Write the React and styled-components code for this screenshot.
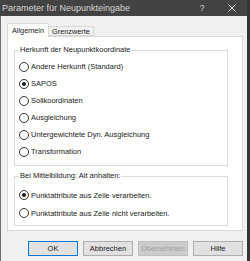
import { styled, createGlobalStyle } from "styled-components";

const GlobalStyle = createGlobalStyle`
  * { box-sizing: border-box; }
  html, body {
    margin: 0;
    background: #353535;
    overflow: hidden;
    font-family: "Liberation Sans", Arial, sans-serif;
  }
`;

const herkunft = [
  { label: "Andere Herkunft (Standard)" },
  { label: "SAPOS", checked: true },
  { label: "Sollkoordinaten" },
  { label: "Ausgleichung" },
  { label: "Untergewichtete Dyn. Ausgleichung" },
  { label: "Transformation" },
];

const mittel = [
  { label: "Punktattribute aus Zeile verarbeiten.", checked: true },
  { label: "Punktattribute aus Zeile nicht verarbeiten." },
];

function CloseIcon() {
  return (
    <svg width="8" height="8" viewBox="0 0 8 8">
      <path d="M0.5 0.5 L7.5 7.5 M7.5 0.5 L0.5 7.5" stroke="#d8d8d8" strokeWidth="1" />
    </svg>
  );
}

function App() {
  return (
    <>
      <GlobalStyle />
      <Window>
        <TitleBar>
          <Title>Parameter für Neupunkteingabe</Title>
          <TitleButton>?</TitleButton>
          <TitleButton><CloseIcon /></TitleButton>
        </TitleBar>
        <Body>
          <TabStrip>
            <Tab $active>Allgemein</Tab>
            <Tab>Grenzwerte</Tab>
          </TabStrip>
          <Page>
            <Group $top={3} $bottom={5}>
              <Legend>Herkunft der Neupunktkoordinate</Legend>
              {herkunft.map((r) => (
                <RadioRow key={r.label} $h={17}>
                  <RadioDot $checked={r.checked} />
                  {r.label}
                </RadioRow>
              ))}
            </Group>
            <Group $top={5} $bottom={3} $gap={5}>
              <Legend>Bei Mittelbildung: Alt anhalten:</Legend>
              {mittel.map((r) => (
                <RadioRow key={r.label} $h={18}>
                  <RadioDot $checked={r.checked} />
                  {r.label}
                </RadioRow>
              ))}
            </Group>
          </Page>
          <ButtonRow>
            <Button $default>OK</Button>
            <Button>Abbrechen</Button>
            <Button disabled>Übernehmen</Button>
            <Button>Hilfe</Button>
          </ButtonRow>
        </Body>
      </Window>
    </>
  );
}

const Window = styled.div`
  width: 247px;
  height: 261px;
  display: flex;
  flex-direction: column;
  background: #f0f0f0;
`;

const TitleBar = styled.div`
  height: 16px;
  flex: none;
  display: flex;
  align-items: center;
  background: #434343;
  color: #d6d6d6;
  font-size: 9px;
  padding-left: 2px;
`;

const Title = styled.div`
  flex: 1;
  white-space: nowrap;
`;

const TitleButton = styled.div`
  width: 30px;
  height: 16px;
  display: flex;
  align-items: center;
  justify-content: center;
  font-size: 8.5px;
`;

const Body = styled.div`
  flex: 1;
  display: flex;
  flex-direction: column;
  border-left: 1px solid #707070;
  padding: 7px 4px 0 6px;
`;

const TabStrip = styled.div`
  height: 13px;
  display: flex;
  align-items: flex-end;
`;

const Tab = styled.div`
  height: ${(p) => (p.$active ? "14px" : "10px")};
  margin-bottom: ${(p) => (p.$active ? "-1px" : "0")};
  position: relative;
  z-index: 1;
  display: flex;
  align-items: center;
  padding: ${(p) => (p.$active ? "0 4px 1px" : "0 3px")};
  background: ${(p) => (p.$active ? "#fff" : "#f0f0f0")};
  border: 1px solid #d9d9d9;
  border-bottom: ${(p) => (p.$active ? "none" : "1px solid #d9d9d9")};
  border-left: ${(p) => (p.$active ? "1px solid #d9d9d9" : "none")};
  font-size: 7.3px;
  color: #1a1a1a;
  white-space: nowrap;
`;

const Page = styled.div`
  height: 195px;
  flex: none;
  background: #fff;
  border: 1px solid #d9d9d9;
  padding: 8px 14px 0 6px;
`;

const Group = styled.fieldset`
  margin: ${(p) => p.$gap || 0}px 0 0 0;
  padding: ${(p) => p.$top}px 0 ${(p) => p.$bottom}px 4px;
  border: 1px solid #dcdcdc;
  min-width: 0;
`;

const Legend = styled.legend`
  padding: 0 1px;
  font-size: 7.5px;
  line-height: 10px;
  color: #1a1a1a;
  white-space: nowrap;
`;

const RadioRow = styled.div`
  height: ${(p) => p.$h}px;
  display: flex;
  align-items: center;
  font-size: 7.5px;
  color: #1a1a1a;
  white-space: nowrap;
`;

const RadioDot = styled.span`
  width: 10px;
  height: 10px;
  flex: none;
  margin-right: 2px;
  border-radius: 50%;
  border: 1px solid #333;
  background: #fff;
  display: flex;
  align-items: center;
  justify-content: center;
  &::after {
    content: "";
    width: 4px;
    height: 4px;
    border-radius: 50%;
    background: ${(p) => (p.$checked ? "#1a1a1a" : "transparent")};
  }
`;

const ButtonRow = styled.div`
  display: flex;
  justify-content: flex-end;
  gap: 5px;
  margin-top: 10px;
`;

const Button = styled.button`
  width: 50px;
  height: 15px;
  padding: 0;
  font: inherit;
  font-size: 7.5px;
  color: #1a1a1a;
  background: #e1e1e1;
  border: 1px solid ${(p) => (p.$default ? "#0078d7" : "#adadad")};
  &:disabled {
    color: #a0a0a0;
    background: #cccccc;
    border-color: #bfbfbf;
  }
`;

export default App;
